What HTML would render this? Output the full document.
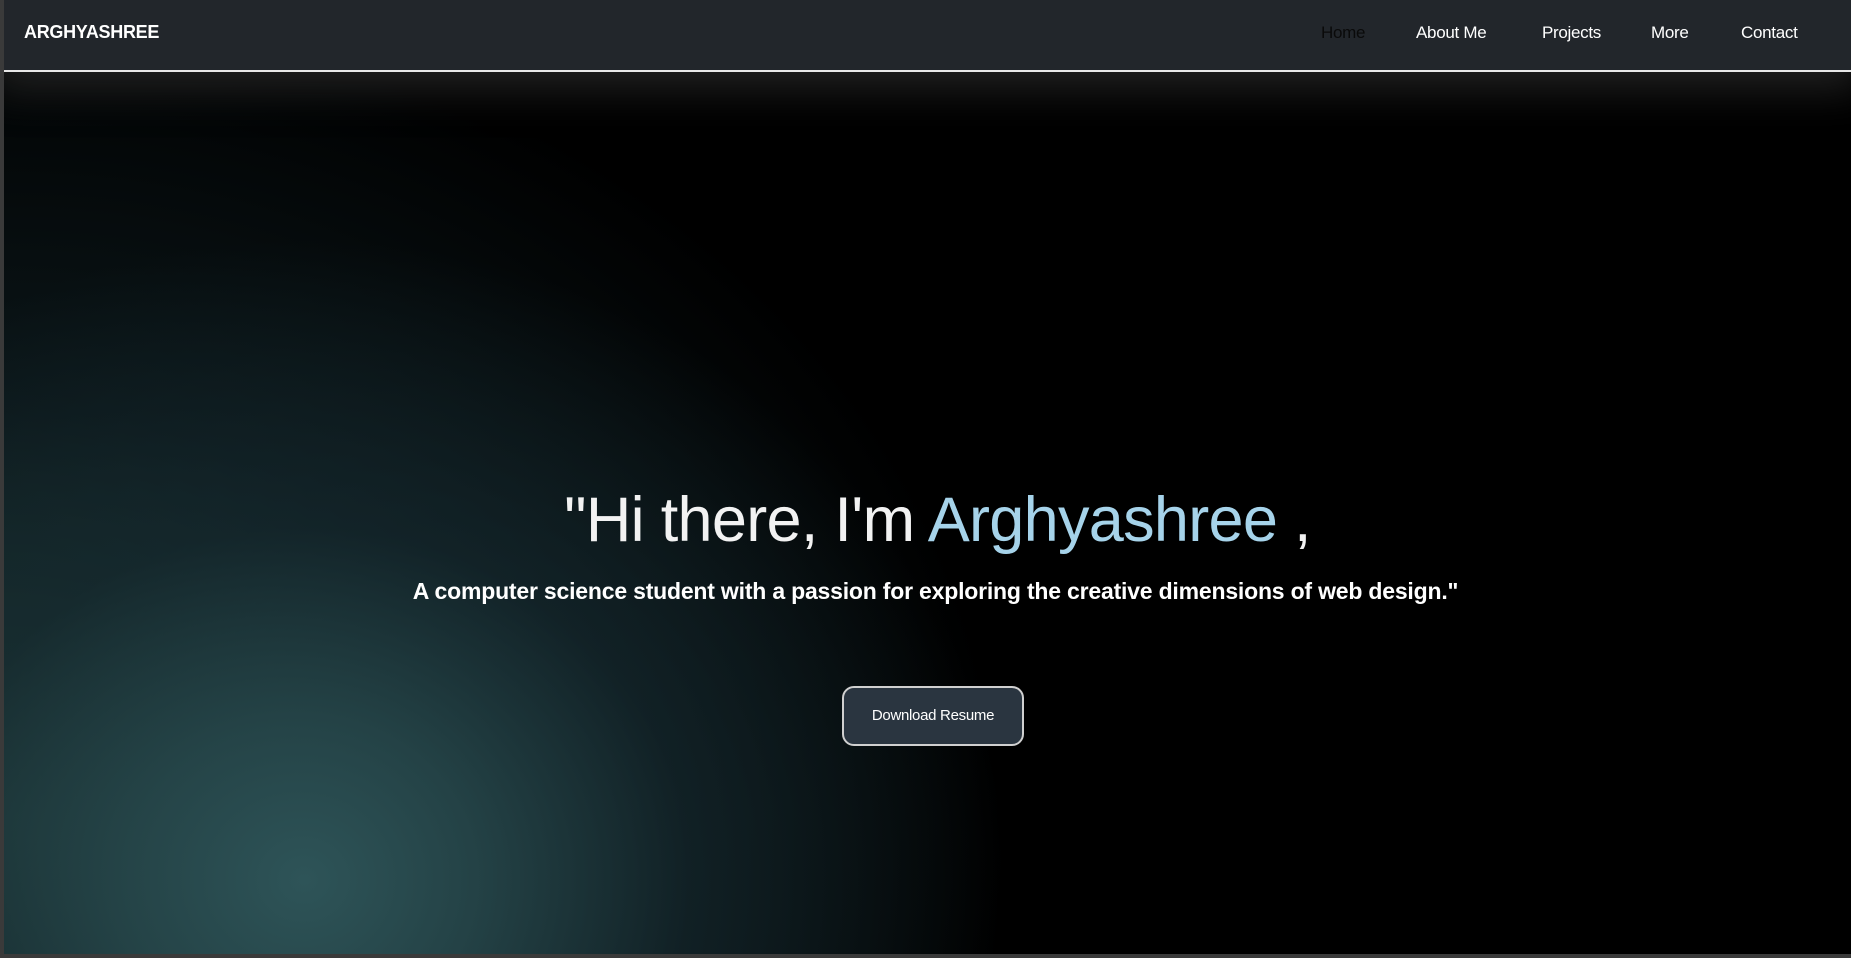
<!DOCTYPE html>
<html><head><meta charset="utf-8"><style>
html,body{margin:0;padding:0;width:1851px;height:958px;overflow:hidden;background:#3a3a3a;font-family:"Liberation Sans",sans-serif}
.page{position:absolute;left:4px;top:0;width:1847px;height:954px;background:
radial-gradient(ellipse 700px 640px at 300px 880px,rgba(46,84,88,1) 0%,rgba(38,70,74,0.9) 25%,rgba(22,42,48,0.65) 55%,rgba(0,0,0,0) 100%),
radial-gradient(ellipse 1000px 820px at 0px 820px,rgba(34,66,62,0.95) 0%,rgba(16,32,36,0.7) 50%,rgba(0,0,0,0) 100%),#000;overflow:hidden}
.nav{position:absolute;left:0;top:0;width:1847px;height:70px;background:#22262b;border-bottom:2px solid #e8e8e8;box-shadow:0 8px 40px 10px rgba(40,40,40,0.8)}
.brand{position:absolute;left:20px;top:22px;color:#fff;font-weight:bold;font-size:18px;letter-spacing:-0.3px}
.nav a{position:absolute;top:23px;color:#fff;font-size:17px;text-decoration:none;letter-spacing:-0.3px}
h1{position:absolute;left:0;width:1847px;top:484px;margin:0;text-align:center;font-weight:300;font-size:63px;color:#f2f2f2;letter-spacing:-0.7px;margin-left:10px}
h1 span{color:#a6d3ea}
p{position:absolute;left:0;width:1847px;top:578px;margin:0;text-align:center;font-weight:bold;font-size:23px;color:#fff;letter-spacing:-0.2px;margin-left:8px}
.btn{position:absolute;left:838px;top:686px;width:182px;height:60px;box-sizing:border-box;border:2px solid #d0d0d0;border-radius:12px;background:#2a3540;color:#fff;font-size:15px;line-height:56px;text-align:center;letter-spacing:-0.3px}
</style></head><body>
<div class="page">
<div class="nav">
<div class="brand">ARGHYASHREE</div>
<a style="left:1317px;color:#0a0a0a">Home</a>
<a style="left:1412px">About Me</a>
<a style="left:1538px">Projects</a>
<a style="left:1647px">More</a>
<a style="left:1737px">Contact</a>
</div>
<h1>"Hi there, I'm <span>Arghyashree</span> ,</h1>
<p>A computer science student with a passion for exploring the creative dimensions of web design."</p>
<div class="btn">Download Resume</div>
</div>
</body></html>
